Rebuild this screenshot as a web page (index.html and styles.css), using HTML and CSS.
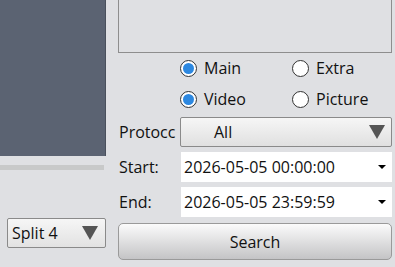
FILE: index.html
```html
<!DOCTYPE html>
<html>
<head>
<meta charset="utf-8">
<link rel="stylesheet" href="styles.css">
</head>
<body>
<div class="app">
  <div class="left">
    <div class="video"></div>
    <div class="slider"></div>
    <div class="split">
      <span>Split 4</span>
      <span class="tri"></span>
    </div>
  </div>
  <div class="right">
    <div class="box"></div>
    <div class="radios">
      <div class="radio-row">
        <label class="radio"><span class="dot on"></span>Main</label>
        <label class="radio"><span class="dot"></span>Extra</label>
      </div>
      <div class="radio-row">
        <label class="radio"><span class="dot on"></span>Video</label>
        <label class="radio"><span class="dot"></span>Picture</label>
      </div>
    </div>
    <div class="field">
      <span class="label">Protocc</span>
      <div class="select"><span class="val">All</span><span class="tri"></span></div>
    </div>
    <div class="field">
      <span class="label">Start:</span>
      <div class="date"><span>2026-05-05 00:00:00</span><span class="tri-s"></span></div>
    </div>
    <div class="field">
      <span class="label">End:</span>
      <div class="date"><span>2026-05-05 23:59:59</span><span class="tri-s"></span></div>
    </div>
    <div class="search">Search</div>
  </div>
</div>
</body>
</html>
```
FILE: styles.css
```css
* { box-sizing: border-box; }
html, body { margin: 0; padding: 0; }
body {
  width: 395px;
  height: 267px;
  overflow: hidden;
  background: #dfe0e3;
  font-family: "Open Sans", "Noto Sans", sans-serif;
  font-size: 16px;
  color: #111;
}
.app { display: flex; height: 267px; }
.left { width: 106px; flex-shrink: 0; display: flex; flex-direction: column; }
.video {
  height: 156px;
  background: #5b6372;
  border-right: 1px solid #4a505c;
}
.slider {
  margin-top: 9px;
  height: 5px;
  background: #c8c9c9;
  margin-right: 2px;
}
.split {
  margin-top: 48px;
  margin-left: 7px;
  height: 30px;
  border: 1px solid #8a8a8a;
  border-radius: 2px;
  background: linear-gradient(#f6f6f6, #e2e2e2);
  display: flex;
  align-items: center;
  justify-content: space-between;
  padding: 0 7px 0 4px;
}
.tri {
  width: 0; height: 0;
  border-left: 8px solid transparent;
  border-right: 8px solid transparent;
  border-top: 14px solid #555;
}
.right {
  flex: 1;
  min-width: 0;
  margin-left: 12px;
  margin-right: 3px;
  display: flex;
  flex-direction: column;
}
.box {
  margin-top: -10px;
  height: 63px;
  border: 1px solid #8e8e8e;
}
.radios { margin-top: 7px; padding-left: 62px; display: flex; flex-direction: column; gap: 15px; }
.radio-row { display: flex; height: 16px; }
.radio { display: flex; flex-shrink: 0; align-items: center; gap: 7px; width: 112px; line-height: 16px; }
.dot {
  width: 17px; height: 17px;
  flex-shrink: 0;
  border-radius: 50%;
  border: 1px solid #333;
  background: #fff;
  display: flex; align-items: center; justify-content: center;
}
.dot.on::after {
  content: "";
  width: 11px; height: 11px;
  border-radius: 50%;
  background: #2d88e0;
}
.field { display: flex; align-items: center; height: 30px; margin-top: 5px; }
.radios + .field { margin-top: 10px; }
.field + .field + .field { margin-top: 5px; }
.label { width: 62px; padding-left: 1px; white-space: nowrap; overflow: hidden; }
.select {
  flex: 1;
  height: 30px;
  border: 1px solid #8a8a8a;
  border-radius: 2px;
  background: linear-gradient(#f6f6f6, #e0e0e0);
  display: flex; align-items: center; justify-content: space-between;
  padding: 0 6px 0 33px;
}
.date {
  flex: 1;
  margin-left: 1px;
  height: 30px;
  background: #fff;
  display: flex; align-items: center; justify-content: space-between;
  padding: 0 6px 0 3px;
}
.tri-s {
  width: 0; height: 0;
  border-left: 4px solid transparent;
  border-right: 4px solid transparent;
  border-top: 4px solid #000;
}
.search {
  margin-top: 6px;
  height: 37px;
  border: 1px solid #9a9a9a;
  border-radius: 5px;
  background: linear-gradient(#fbfbfb, #c4c4c6);
  display: flex; align-items: center; justify-content: center;
}
```
